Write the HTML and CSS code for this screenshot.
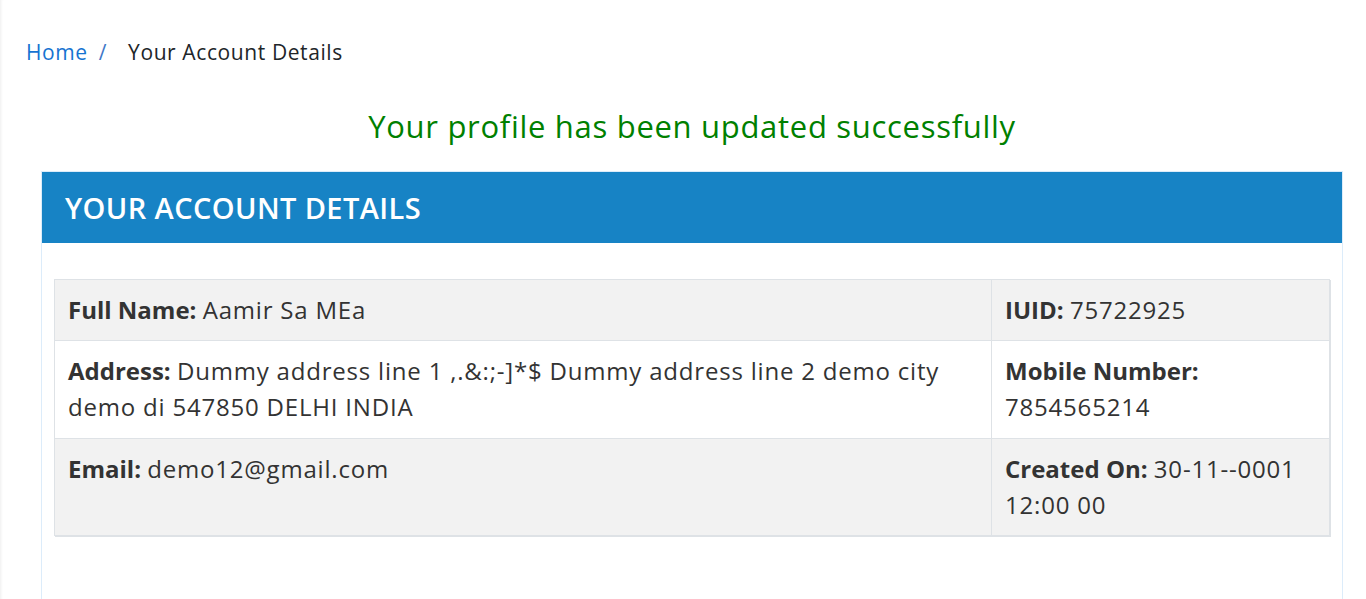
FILE: index.html
```html
<!DOCTYPE html>
<html lang="en">
<head>
<meta charset="utf-8">
<title>Your Account Details</title>
<link rel="stylesheet" href="styles.css">
</head>
<body>
<div class="page">
  <nav class="breadcrumb">
    <a class="crumb-link" href="#">Home</a>
    <span class="crumb-sep">/</span>
    <span class="crumb-current">Your Account Details</span>
  </nav>

  <div class="content">
    <h2 class="success">Your profile has been updated successfully</h2>

    <section class="panel">
      <div class="panel-heading">YOUR ACCOUNT DETAILS</div>
      <div class="panel-body">
        <div class="details">
          <div class="cell striped"><strong class="label">Full Name: </strong>Aamir Sa MEa</div>
          <div class="cell striped"><strong class="label">IUID: </strong>75722925</div>
          <div class="cell"><strong class="label">Address: </strong>Dummy address line 1 ,.&amp;:;-]*$ Dummy address line 2 demo city demo di 547850 DELHI INDIA</div>
          <div class="cell"><strong class="label">Mobile Number: </strong>7854565214</div>
          <div class="cell striped"><strong class="label">Email: </strong>demo12@gmail.com</div>
          <div class="cell striped"><strong class="label">Created On: </strong>30-11--0001 12:00 00</div>
        </div>
      </div>
    </section>
  </div>
</div>
</body>
</html>
```
FILE: styles.css
```css
html, body {
  margin: 0;
  padding: 0;
  background: #ffffff;
}

body {
  font-family: "Open Sans", "Noto Sans", sans-serif;
  color: #212529;
  min-height: 100vh;
  box-shadow: inset 3px 0 3px -2px rgba(0, 0, 0, 0.07);
}

.page {
  padding-top: 37px;
}

.breadcrumb {
  display: flex;
  align-items: baseline;
  padding-left: 26px;
  font-size: 21px;
  line-height: 31.5px;
  letter-spacing: 0.6px;
}

.crumb-link {
  color: #1673d1;
  text-decoration: none;
}

.crumb-sep {
  color: #3f78c8;
  margin-left: 11px;
  margin-right: 21px;
}

.crumb-current {
  color: #212529;
}

.content {
  margin: 0 23px 0 41px;
}

.success {
  margin: 39px 0 26px;
  text-align: center;
  color: #008000;
  font-weight: 400;
  font-size: 31px;
  line-height: 37px;
  letter-spacing: 0.7px;
}

.panel {
  border: 1px solid #dcecfa;
  border-bottom: none;
}

.panel-heading {
  background: #1783c5;
  color: #ffffff;
  font-size: 29px;
  font-weight: 600;
  letter-spacing: 0.4px;
  line-height: 71px;
  padding: 0 23px;
}

.panel-body {
  padding: 36px 12px 80px;
}

.details {
  display: grid;
  grid-template-columns: 937px 1fr;
  border: 1px solid #dee2e6;
  box-shadow: 1px 1px 0 #dee2e6;
  font-size: 24px;
  line-height: 36px;
  color: #333333;
  letter-spacing: 0.8px;
}

.cell {
  padding: 12px 13px 12px 13px;
  border-top: 1px solid #dee2e6;
  background: #ffffff;
}

.cell:nth-child(-n+2) {
  border-top: none;
}

.cell:nth-child(3), .cell:nth-child(4) {
  padding-bottom: 13px;
}

.cell:nth-child(odd) {
  border-right: 1px solid #dee2e6;
}

.cell.striped {
  background: #f2f2f2;
}

.label {
  font-weight: 700;
  color: #333333;
  letter-spacing: 0;
}
```
